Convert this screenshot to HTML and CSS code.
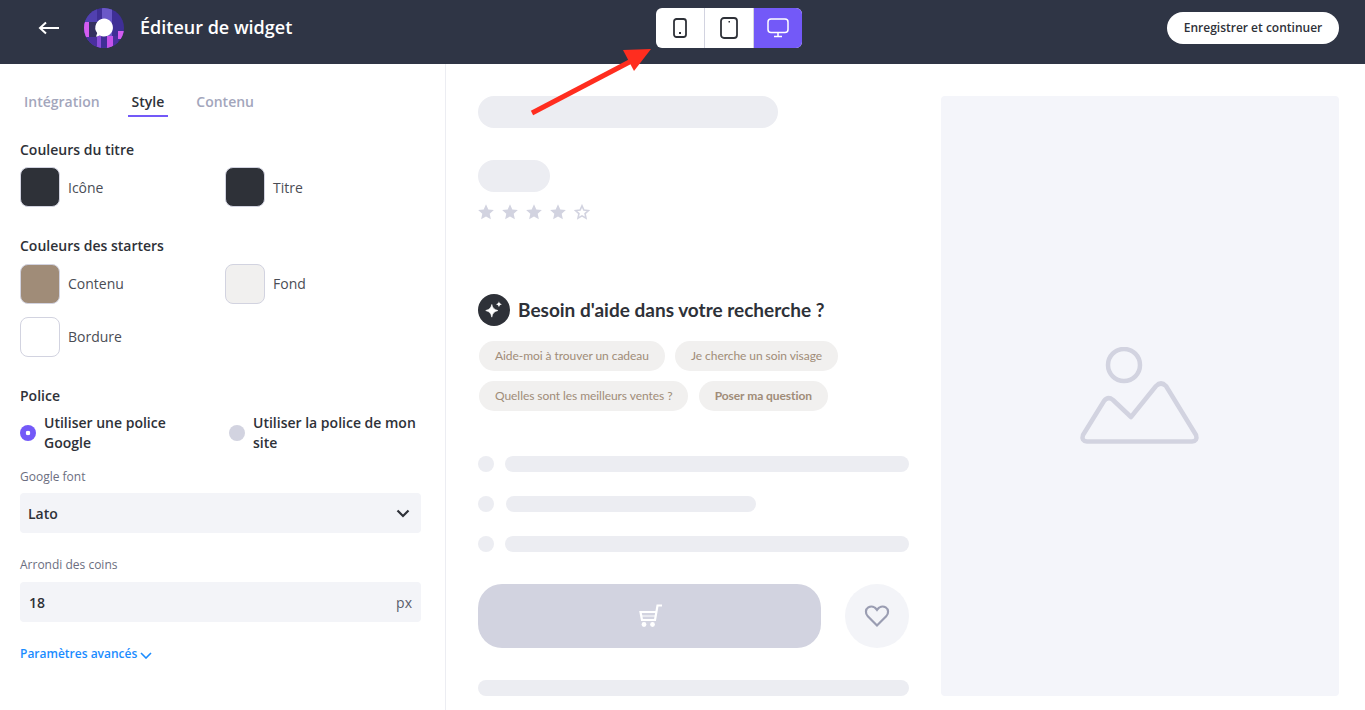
FILE: index.html
```html
<!DOCTYPE html>
<html lang="fr">
<head>
<meta charset="utf-8">
<title>Éditeur de widget</title>
<link rel="stylesheet" href="styles.css">
</head>
<body>
<header class="topbar">
  <div class="top-left">
    <svg class="back" width="22" height="14" viewBox="0 0 22 14"><path d="M21 7H2M8 1.500 2 7l6 5.500" fill="none" stroke="#fff" stroke-width="2"/></svg>
    <svg class="logo" width="40" height="40" viewBox="0 0 40 40">
      <defs><clipPath id="lc"><circle cx="20" cy="20" r="20"/></clipPath></defs>
      <g clip-path="url(#lc)">
        <rect width="40" height="40" fill="#3f2f96"/>
        <rect x="0" y="0" width="13" height="40" fill="#5140b0"/>
        <rect x="13" y="0" width="5" height="40" fill="#3f2f96"/>
        <rect x="18" y="0" width="10" height="40" fill="#6b58c8"/>
        <rect x="0" y="14" width="5" height="15" fill="#d45cf0"/>
        <rect x="5" y="14" width="8" height="15" fill="#34305f"/>
        <rect x="0" y="29" width="13" height="11" fill="#4a2f9e"/>
        <rect x="13" y="28" width="4" height="12" fill="#8a4cd8"/>
        <rect x="17" y="28" width="6" height="12" fill="#3f2f96"/>
        <rect x="23" y="28" width="6" height="12" fill="#c653ea"/>
        <rect x="29" y="28" width="5" height="12" fill="#4a2f9e"/>
        <rect x="34" y="23" width="6" height="8" fill="#d45cf0"/>
        <path d="M20 10.500a9 9 0 1 1-4.200 17l-3.800 1.300 1.200-3.800A9 9 0 0 1 20 10.500z" fill="#fff"/>
      </g>
    </svg>
    <span class="app-title">Éditeur de widget</span>
  </div>
  <div class="devices">
    <div class="device">
      <svg width="14" height="20" viewBox="0 0 14 20"><rect x="1" y="1" width="12" height="18" rx="2.500" fill="none" stroke="#2e3138" stroke-width="1.800"/><rect x="6" y="14" width="2" height="2" fill="#2e3138"/></svg>
    </div>
    <div class="device device-mid">
      <svg width="18" height="22" viewBox="0 0 18 22"><rect x="1" y="1" width="16" height="20" rx="3" fill="none" stroke="#2e3138" stroke-width="1.800"/><rect x="8.500" y="4" width="1.500" height="1.500" fill="#2e3138"/></svg>
    </div>
    <div class="device device-on">
      <svg width="22" height="20" viewBox="0 0 22 20"><rect x="1" y="1" width="20" height="13.500" rx="3" fill="none" stroke="#fff" stroke-width="1.500"/><path d="M11 15v3M7 18.500h8" fill="none" stroke="#fff" stroke-width="1.500"/></svg>
    </div>
  </div>
  <button class="save">Enregistrer et continuer</button>
</header>

<main class="main">
  <aside class="side">
    <nav class="tabs">
      <span class="tab">Intégration</span>
      <span class="tab tab-on">Style</span>
      <span class="tab">Contenu</span>
    </nav>

    <h3 class="group-title">Couleurs du titre</h3>
    <div class="swatches swatches-first">
      <div class="swatch-item"><span class="swatch sw-dark"></span><span>Icône</span></div>
      <div class="swatch-item"><span class="swatch sw-dark"></span><span>Titre</span></div>
    </div>

    <h3 class="group-title group-second">Couleurs des starters</h3>
    <div class="swatches swatches-second">
      <div class="swatch-item"><span class="swatch sw-brown"></span><span>Contenu</span></div>
      <div class="swatch-item"><span class="swatch sw-light"></span><span>Fond</span></div>
      <div class="swatch-item"><span class="swatch sw-white"></span><span>Bordure</span></div>
    </div>

    <h3 class="group-title group-third">Police</h3>
    <div class="radios">
      <div class="radio-item"><span class="radio radio-on"></span><span>Utiliser une police Google</span></div>
      <div class="radio-item"><span class="radio"></span><span>Utiliser la police de mon site</span></div>
    </div>

    <label class="field-label">Google font</label>
    <div class="field">
      <span class="field-value field-value-select">Lato</span>
      <svg width="14" height="9" viewBox="0 0 14 9"><path d="M1.500 1.500 7 7l5.500-5.500" fill="none" stroke="#2e3138" stroke-width="2.200"/></svg>
    </div>

    <label class="field-label field-label-2">Arrondi des coins</label>
    <div class="field field-2">
      <span class="field-value">18</span>
      <span class="unit">px</span>
    </div>

    <a class="advanced">Paramètres avancés
      <svg width="12" height="7" viewBox="0 0 12 7"><path d="M1 1l5 5 5-5" fill="none" stroke="#1a8cff" stroke-width="1.600"/></svg>
    </a>
  </aside>

  <section class="preview">
    <div class="col">
      <div class="bar bar-title"></div>
      <div class="bar bar-price"></div>
      <div class="stars">
        <svg width="16" height="16" viewBox="1 1 22 22"><path class="st-fill" d="M12 1.500l3.200 7 7.600.8-5.700 5.100 1.600 7.500L12 18.100l-6.700 3.800 1.600-7.500L1.200 9.300l7.600-.8z"/></svg>
        <svg width="16" height="16" viewBox="1 1 22 22"><path class="st-fill" d="M12 1.500l3.200 7 7.600.8-5.700 5.100 1.600 7.500L12 18.100l-6.700 3.800 1.600-7.500L1.200 9.300l7.600-.8z"/></svg>
        <svg width="16" height="16" viewBox="1 1 22 22"><path class="st-fill" d="M12 1.500l3.200 7 7.600.8-5.700 5.100 1.600 7.500L12 18.100l-6.700 3.800 1.600-7.500L1.200 9.300l7.600-.8z"/></svg>
        <svg width="16" height="16" viewBox="1 1 22 22"><path class="st-fill" d="M12 1.500l3.200 7 7.600.8-5.700 5.100 1.600 7.500L12 18.100l-6.700 3.800 1.600-7.500L1.200 9.300l7.600-.8z"/></svg>
        <svg width="16" height="16" viewBox="1 1 22 22"><path class="st-line" d="M12 3.500l2.600 5.800 6.200.7-4.600 4.200 1.300 6.200L12 17.300l-5.500 3.100 1.300-6.200L3.200 10l6.200-.7z"/></svg>
      </div>

      <div class="help">
        <span class="help-icon">
          <svg width="22" height="22" viewBox="0 0 20 20"><path d="M8 5c.8 3.300 2 4.500 5.500 5.500C10 11.500 8.800 12.700 8 16.500 7.200 12.700 6 11.500 2.500 10.500 6 9.500 7.200 8.300 8 5z" fill="#fff" stroke="#fff" stroke-width=".6"/><path d="M14.500 2c.4 1.600 1 2.200 2.700 2.700-1.700.5-2.300 1.100-2.700 2.800-.4-1.700-1-2.300-2.700-2.800C13.500 4.200 14.100 3.600 14.500 2z" fill="#fff"/></svg>
        </span>
        <span class="help-title">Besoin d'aide dans votre recherche ?</span>
      </div>
      <div class="chips">
        <span class="chip">Aide-moi à trouver un cadeau</span>
        <span class="chip">Je cherche un soin visage</span>
        <span class="chip">Quelles sont les meilleurs ventes ?</span>
        <span class="chip chip-bold">Poser ma question</span>
      </div>

      <div class="lines">
        <div class="line"><span class="dot"></span><span class="bar line-bar"></span></div>
        <div class="line"><span class="dot"></span><span class="bar line-bar line-short"></span></div>
        <div class="line"><span class="dot"></span><span class="bar line-bar"></span></div>
      </div>

      <div class="actions">
        <div class="buy">
          <svg width="26" height="24" viewBox="0 0 26 24"><path d="M25 1.500h-4.500L18 16H5L3.500 8H20" fill="none" stroke="#fff" stroke-width="2.200"/><path d="M4 12h15" fill="none" stroke="#fff" stroke-width="1"/><circle cx="7" cy="20.500" r="2.400" fill="#fff"/><circle cx="15.500" cy="20.500" r="2.400" fill="#fff"/></svg>
        </div>
        <div class="wish">
          <svg width="26" height="24" viewBox="0 0 26 24"><path d="M13 21.500 3.800 12.200C1 9.300 1.500 5.200 4.300 3.400c2.900-1.800 6.600-.8 8.700 2.400 2.100-3.200 5.800-4.200 8.700-2.400 2.800 1.800 3.300 5.900.5 8.800z" fill="none" stroke="#9a9db2" stroke-width="2.200"/></svg>
        </div>
      </div>

      <div class="bar bar-foot"></div>
    </div>

    <div class="media">
      <svg width="122" height="98" viewBox="0 0 122 98"><circle cx="46" cy="18" r="16" fill="none" stroke="#d2d3e0" stroke-width="4.500"/><path d="M5 88 26 54Q30 49 35 53L53 70 78 39Q83 34 88 39L118 88Q120 94 114 94.500H9Q3 94 5 88z" fill="none" stroke="#d2d3e0" stroke-width="4.500" stroke-linejoin="round"/></svg>
    </div>
  </section>
</main>

<svg class="arrow" width="130" height="76" viewBox="0 0 130 76"><path d="M3 65 110 9" fill="none" stroke="#ff2d1f" stroke-width="5"/><path d="M122 1 94 2l11 21z" fill="#ff2d1f"/></svg>
</body>
</html>
```
FILE: styles.css
```css
* { box-sizing: border-box; }
html, body { margin: 0; height: 100%; overflow: hidden; }
body { background: #fff; font-family: "Open Sans", sans-serif; color: #2e3138; }

.topbar { height: 64px; background: #2f3545; display: flex; align-items: center; padding: 0 26px 8px 38px; position: relative; }
.top-left { display: flex; align-items: center; flex: 1; }
.back { margin-right: 24px; }
.logo { margin-right: 16px; }
.app-title { color: #fff; font-size: 18px; font-weight: 600; margin-bottom: 2px; }

.devices { position: absolute; left: 656px; top: 8px; height: 40px; width: 146px; display: flex; background: #fff; border-radius: 6px; overflow: hidden; }
.device { flex: 0 0 48px; display: flex; align-items: center; justify-content: center; }
.device-mid { flex: 0 0 50px; border-left: 1px solid #d2d3e0; border-right: 1px solid #d2d3e0; }
.device-on { background: #7359f8; }

.save { height: 32px; width: 172px; border: 0; border-radius: 16px; background: #fff; color: #2e3138; font: 600 12px "Open Sans", sans-serif; padding: 0 0 2px; }

.main { display: flex; height: 646px; }
.side { flex: 0 0 446px; border-right: 1px solid #ecedf2; padding: 0 24px 0 20px; font-size: 14px; }

.tabs { display: flex; gap: 32px; padding: 20px 0 0 4px; height: 53px; }
.tab { font-weight: 600; color: #a3a6bc; font-size: 14px; line-height: 35px; height: 33px; position: relative; }
.tab-on { color: #2e3138; }
.tab-on::after { content: ""; position: absolute; left: -4px; right: -4px; bottom: 0; height: 2px; background: #7359f8; }

.group-title { margin: 0; font-size: 14px; font-weight: 600; line-height: 20px; padding-top: 23px; color: #2e3138; }
.group-second { padding-top: 29px; }
.group-third { padding-top: 29px; }

.swatches { display: grid; grid-template-columns: 205px 1fr; row-gap: 13px; margin-top: 8px; }
.swatches-first { margin-top: 7px; }
.swatch-item { display: flex; align-items: center; gap: 8px; color: #4a4d55; font-size: 14px; height: 40px; }
.swatches-second .swatch-item span:last-child { margin-bottom: 2px; }
.swatch { width: 40px; height: 40px; border-radius: 8px; border: 1px solid #d2d3e0; flex: none; }
.sw-dark { background: #2e3138; }
.sw-brown { background: #a08c78; }
.sw-light { background: #f1f0ef; }
.sw-white { background: #fff; }

.radios { display: grid; grid-template-columns: 209px 1fr; margin-top: 7px; }
.radio-item { display: flex; align-items: center; gap: 8px; font-weight: 600; font-size: 14px; line-height: 20px; color: #2e3138; padding-right: 24px; }
.radio-item:last-child { padding-right: 0; }
.radio { width: 16px; height: 16px; border-radius: 50%; background: #d2d3e0; flex: none; }
.radio-on { background: radial-gradient(circle, #fff 0 2px, #7359f8 2.600px); }

.field-label { display: block; font-size: 12px; line-height: 16px; color: #6b6e80; margin-top: 16px; }
.field-label-2 { margin-top: 24px; }
.field { height: 40px; margin-top: 8px; background: #f3f4f8; border-radius: 4px; display: flex; align-items: center; justify-content: space-between; padding: 0 11px 0 9px; }
.field-2 { margin-top: 9px; }
.field-value { font-size: 14px; font-weight: 600; color: #2e3138; }
.field-value-select { margin-left: -1px; }
.unit { font-size: 14px; color: #5a5d6c; margin-right: -2px; }

.advanced { display: flex; align-items: center; gap: 3px; margin-top: 24px; font-size: 12px; line-height: 16px; font-weight: 600; color: #1a8cff; }
.advanced svg { margin-top: 3px; }

.preview { flex: 1; display: flex; gap: 32px; padding: 32px 26px 0 32px; align-items: flex-start; }
.col { flex: 0 0 431px; font-family: Lato, sans-serif; }
.media { flex: 1; height: 600px; background: #f4f5fa; border-radius: 4px; display: flex; align-items: center; justify-content: center; }
.media svg { margin-left: -2px; }

.bar { display: block; background: #ecedf2; }
.bar-title { width: 300px; height: 32px; border-radius: 16px; }
.bar-price { width: 72px; height: 32px; border-radius: 16px; margin-top: 32px; }
.stars { display: flex; gap: 8px; margin-top: 12px; height: 16px; }
.st-fill { fill: #d2d3e0; }
.st-line { fill: none; stroke: #d2d3e0; stroke-width: 2.200; }

.help { display: flex; align-items: center; gap: 8px; margin-top: 74px; height: 32px; }
.help-icon { width: 32px; height: 32px; border-radius: 50%; background: #2e3138; display: flex; align-items: center; justify-content: center; }
.help-title { font-size: 19px; font-weight: 700; color: #2e3138; margin-bottom: 2px; }

.chips { display: flex; flex-wrap: wrap; gap: 10px 10.2px; margin-top: 15px; padding-left: 1px; }
.chip { height: 30px; line-height: 30px; padding: 0 16px; border-radius: 15px; background: #f1f0ef; color: #a08c78; font-size: 12px; letter-spacing: -0.06px; }
.chip-bold { font-weight: 700; }

.lines { margin-top: 45px; display: flex; flex-direction: column; gap: 24px; }
.line { display: flex; align-items: center; gap: 11px; }
.dot { width: 16px; height: 16px; border-radius: 50%; background: #ecedf2; flex: none; }
.line-bar { flex: 1; height: 16px; border-radius: 8px; }
.line-short { flex: 0 0 250px; margin-left: 1px; }

.actions { display: flex; gap: 24px; margin-top: 32px; }
.buy { flex: 0 0 343px; height: 64px; border-radius: 24px; background: #d2d3e0; display: flex; align-items: center; justify-content: center; }
.wish { width: 64px; height: 64px; border-radius: 50%; background: #f3f4f8; display: flex; align-items: center; justify-content: center; }

.bar-foot { height: 16px; border-radius: 8px; margin-top: 32px; }

.arrow { position: absolute; left: 529px; top: 48px; }
```
